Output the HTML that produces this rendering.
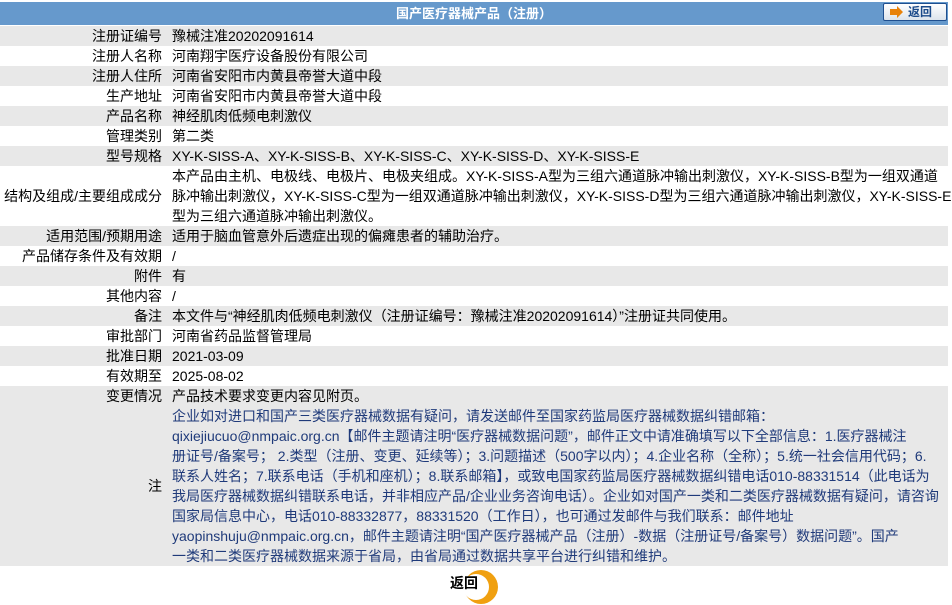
<!DOCTYPE html>
<html><head><meta charset="utf-8"><style>
body{margin:0;width:952px;height:604px;background:#fff;font-family:"Liberation Sans","Noto Sans CJK SC",sans-serif;font-size:14px;color:#000;overflow:hidden;position:relative}
.hd{position:absolute;left:0;top:2px;width:948px;height:23px;background:#6699cc;color:#fff;font-weight:bold;font-size:13px;text-align:center;line-height:23px}
.btn{position:absolute;left:883px;top:3px;width:62px;height:16px;border:1px solid #1f4f8f;border-radius:2px;background:linear-gradient(#fff,#dde4ec);}
.btn span{position:absolute;left:24px;top:0;line-height:16px;color:#1b4a8a;font-weight:bold;font-size:12px}
.r{position:absolute;left:0;width:948px;}
.r.g{background:#e8e8e8}
.l{position:absolute;left:0;width:162px;text-align:right;white-space:nowrap}
.v{position:absolute;left:172px;white-space:nowrap}
.ln{height:20px;line-height:20px;white-space:nowrap}
.n{color:#1f3a7a}
.bk{position:absolute;left:450px;top:573px;font-weight:bold;font-size:14px;line-height:20px}
</style></head><body>
<div class="hd">国产医疗器械产品（注册）</div>
<div class="btn"><svg width="20" height="16" style="position:absolute;left:4px;top:0"><path d="M2 5h7V2l6 6-6 6v-3H2z" fill="#e8820a"/></svg><span>返回</span></div>

<div class="r g" style="top:26px;height:20px"><div class="l ln">注册证编号</div><div class="v ln">豫械注准20202091614</div></div>
<div class="r" style="top:46px;height:20px"><div class="l ln">注册人名称</div><div class="v ln">河南翔宇医疗设备股份有限公司</div></div>
<div class="r g" style="top:66px;height:20px"><div class="l ln">注册人住所</div><div class="v ln">河南省安阳市内黄县帝誉大道中段</div></div>
<div class="r" style="top:86px;height:20px"><div class="l ln">生产地址</div><div class="v ln">河南省安阳市内黄县帝誉大道中段</div></div>
<div class="r g" style="top:106px;height:20px"><div class="l ln">产品名称</div><div class="v ln">神经肌肉低频电刺激仪</div></div>
<div class="r" style="top:126px;height:20px"><div class="l ln">管理类别</div><div class="v ln">第二类</div></div>
<div class="r g" style="top:146px;height:20px"><div class="l ln">型号规格</div><div class="v ln">XY-K-SISS-A、XY-K-SISS-B、XY-K-SISS-C、XY-K-SISS-D、XY-K-SISS-E</div></div>
<div class="r" style="top:166px;height:60px"><div class="l ln" style="top:20px">结构及组成/主要组成成分</div><div class="v"><div class="ln">本产品由主机、电极线、电极片、电极夹组成。XY-K-SISS-A型为三组六通道脉冲输出刺激仪，XY-K-SISS-B型为一组双通道</div><div class="ln">脉冲输出刺激仪，XY-K-SISS-C型为一组双通道脉冲输出刺激仪，XY-K-SISS-D型为三组六通道脉冲输出刺激仪，XY-K-SISS-E</div><div class="ln">型为三组六通道脉冲输出刺激仪。</div></div></div>
<div class="r g" style="top:226px;height:20px"><div class="l ln">适用范围/预期用途</div><div class="v ln">适用于脑血管意外后遗症出现的偏瘫患者的辅助治疗。</div></div>
<div class="r" style="top:246px;height:20px"><div class="l ln">产品储存条件及有效期</div><div class="v ln">/</div></div>
<div class="r g" style="top:266px;height:20px"><div class="l ln">附件</div><div class="v ln">有</div></div>
<div class="r" style="top:286px;height:20px"><div class="l ln">其他内容</div><div class="v ln">/</div></div>
<div class="r g" style="top:306px;height:20px"><div class="l ln">备注</div><div class="v ln">本文件与“神经肌肉低频电刺激仪（注册证编号：豫械注准20202091614）”注册证共同使用。</div></div>
<div class="r" style="top:326px;height:20px"><div class="l ln">审批部门</div><div class="v ln">河南省药品监督管理局</div></div>
<div class="r g" style="top:346px;height:20px"><div class="l ln">批准日期</div><div class="v ln">2021-03-09</div></div>
<div class="r" style="top:366px;height:20px"><div class="l ln">有效期至</div><div class="v ln">2025-08-02</div></div>
<div class="r g" style="top:386px;height:20px"><div class="l ln">变更情况</div><div class="v ln">产品技术要求变更内容见附页。</div></div>
<div class="r g" style="top:406px;height:160px"><div class="l ln" style="top:70px">注</div><div class="v n">
<div class="ln">企业如对进口和国产三类医疗器械数据有疑问，请发送邮件至国家药监局医疗器械数据纠错邮箱：</div>
<div class="ln">qixiejiucuo@nmpaic.org.cn【邮件主题请注明“医疗器械数据问题”，邮件正文中请准确填写以下全部信息：1.医疗器械注</div>
<div class="ln">册证号/备案号； 2.类型（注册、变更、延续等）；3.问题描述（500字以内）；4.企业名称（全称）；5.统一社会信用代码；6.</div>
<div class="ln">联系人姓名；7.联系电话（手机和座机）；8.联系邮箱】，或致电国家药监局医疗器械数据纠错电话010-88331514（此电话为</div>
<div class="ln">我局医疗器械数据纠错联系电话，并非相应产品/企业业务咨询电话）。企业如对国产一类和二类医疗器械数据有疑问，请咨询</div>
<div class="ln">国家局信息中心，电话010-88332877，88331520（工作日），也可通过发邮件与我们联系：邮件地址</div>
<div class="ln">yaopinshuju@nmpaic.org.cn，邮件主题请注明“国产医疗器械产品（注册）-数据（注册证号/备案号）数据问题”。国产</div>
<div class="ln">一类和二类医疗器械数据来源于省局，由省局通过数据共享平台进行纠错和维护。</div>
</div></div>
<svg style="position:absolute;left:462px;top:569px" width="38" height="36"><circle cx="19" cy="18" r="17" fill="#f0a010"/><circle cx="14" cy="18" r="13" fill="#fff"/></svg>
<div class="bk">返回</div>
</body></html>
